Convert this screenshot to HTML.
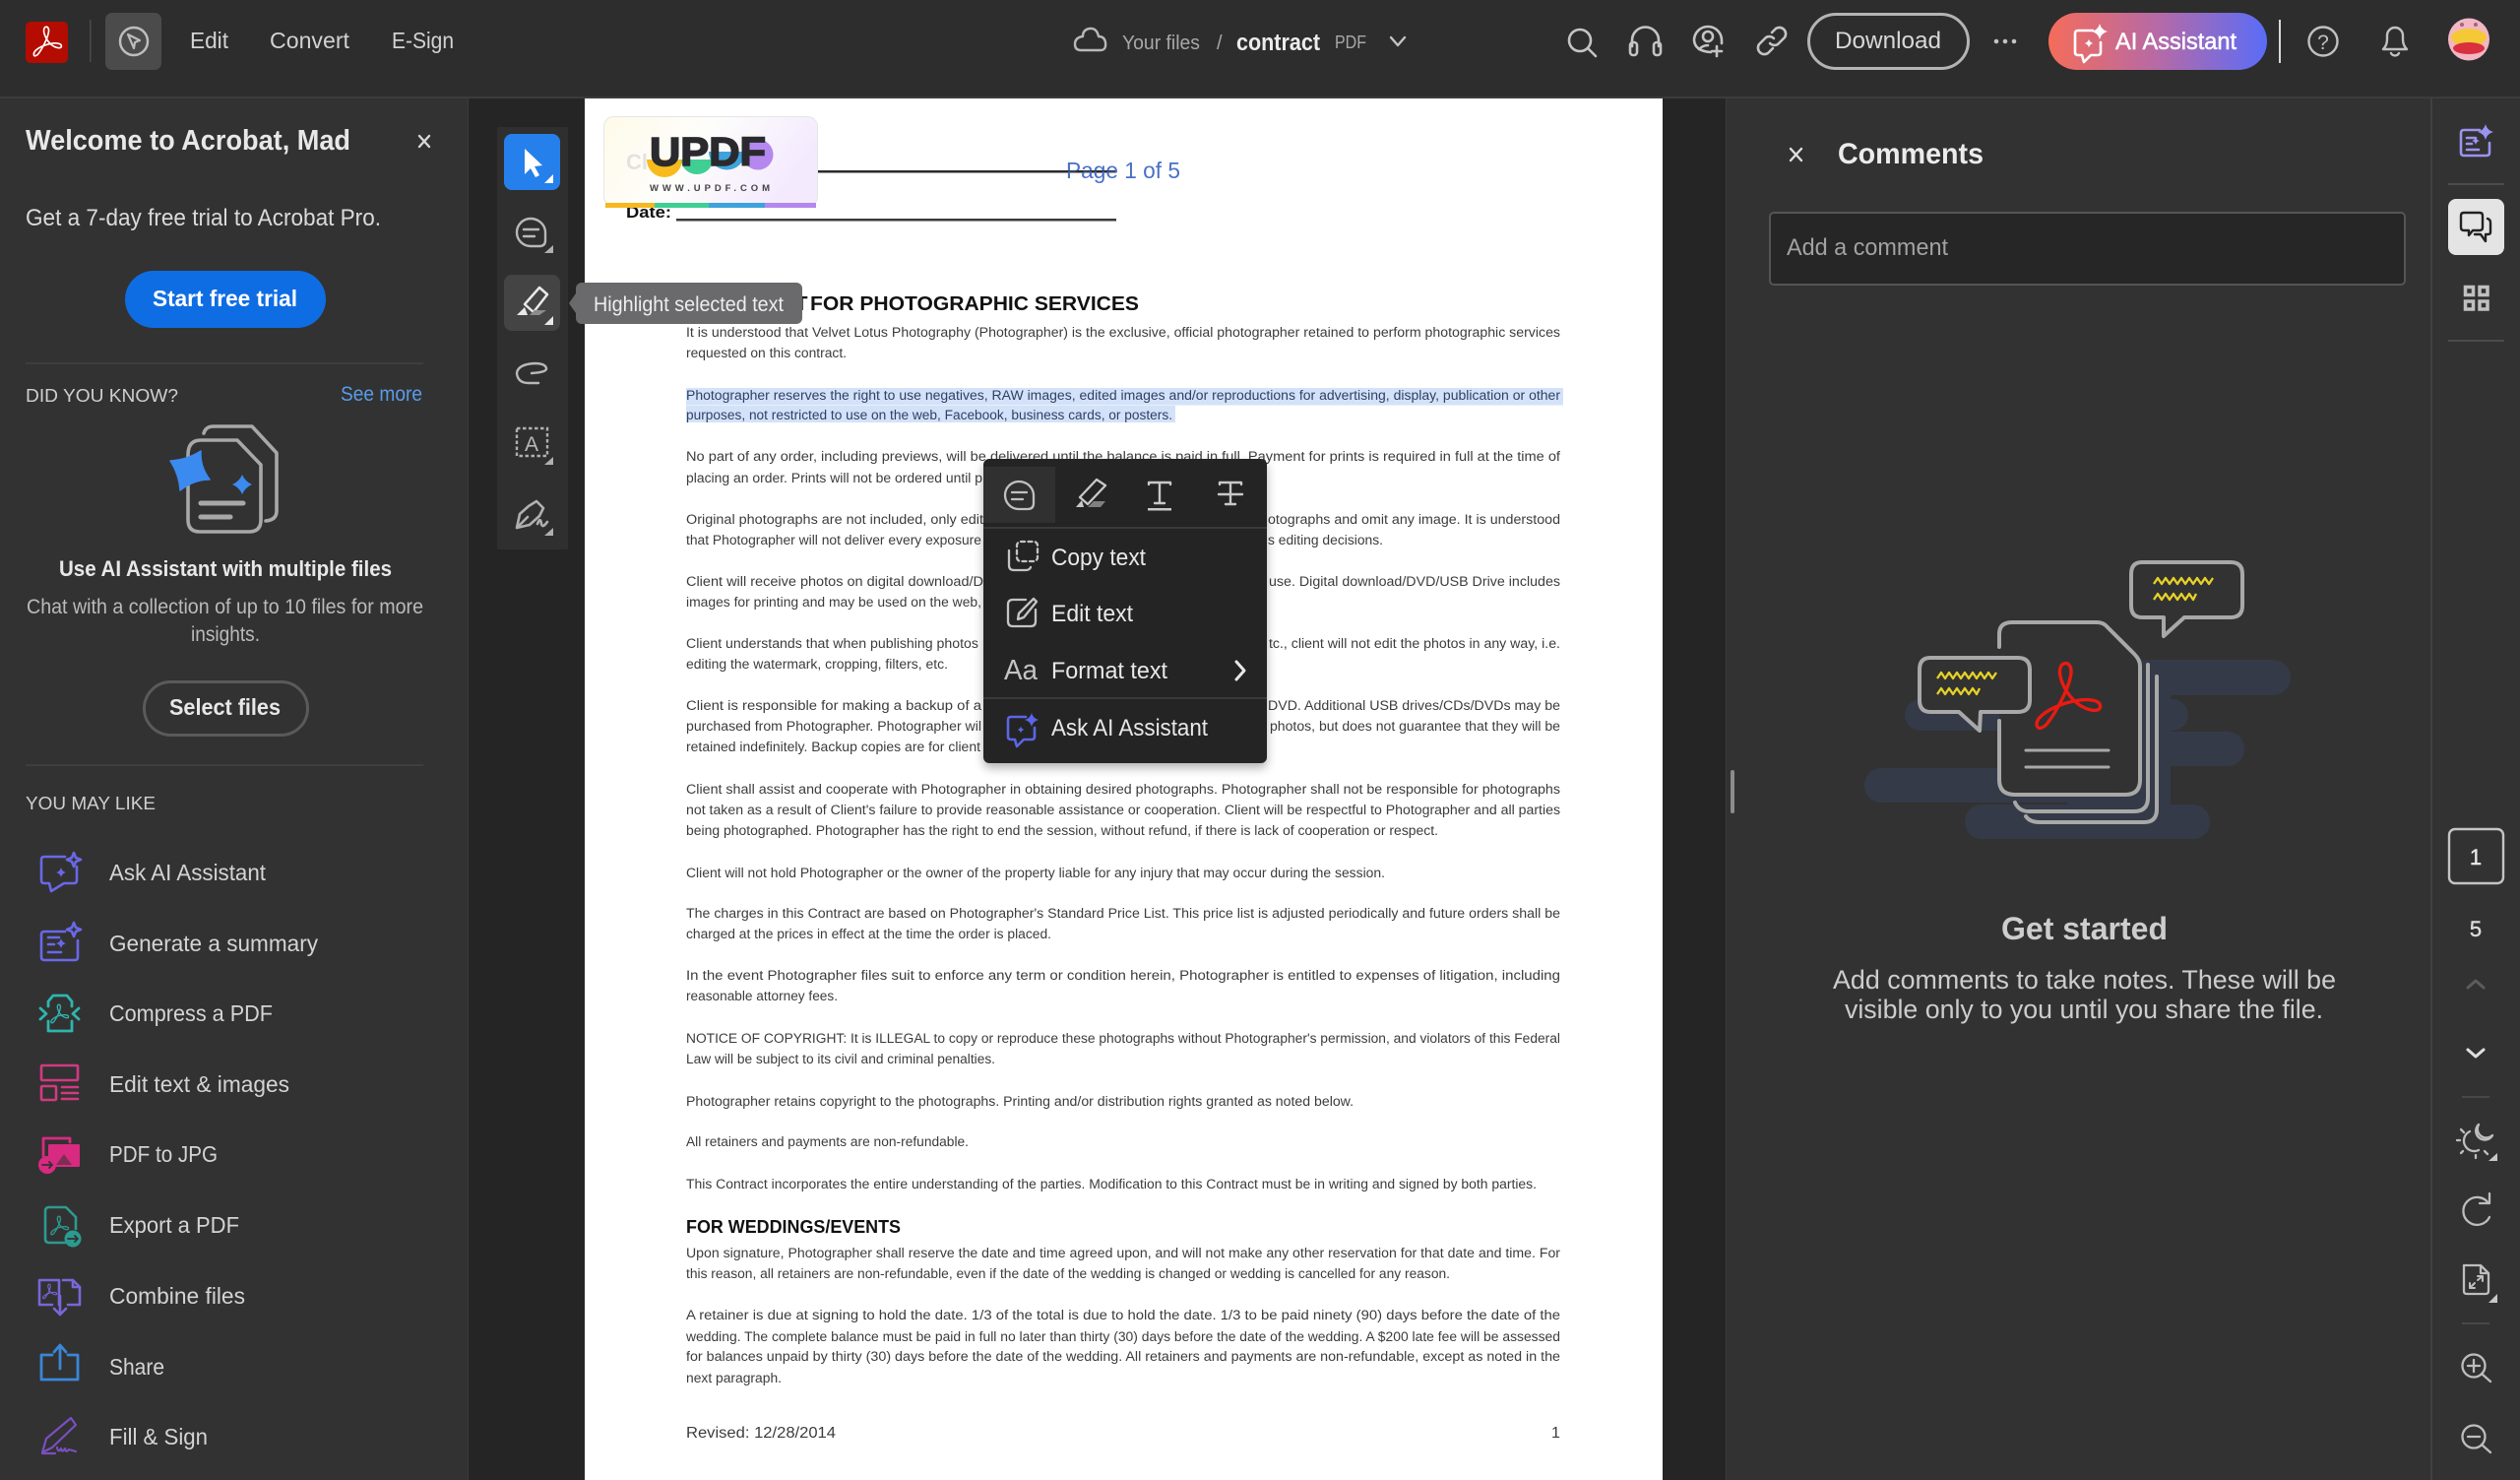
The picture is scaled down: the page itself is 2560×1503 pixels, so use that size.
<!DOCTYPE html>
<html lang="en">
<head>
<meta charset="utf-8">
<title>Adobe Acrobat - contract</title>
<style>
html,body{margin:0;padding:0;width:2560px;height:1503px;overflow:hidden;background:#2d2d2d}
svg{display:block;font-family:"Liberation Sans",Arial,sans-serif}
.d text{font-size:13.5px;fill:#3c3c3c}
.h text{font-size:13.5px;fill:#2f3f66}
.m text{font-size:24px;fill:#e8e8e8}
.l text{font-size:23px;fill:#d4d4d4}
.ic{fill:none;stroke-linecap:round;stroke-linejoin:round}
</style>
</head>
<body>
<svg width="2560" height="1503" viewBox="0 0 2560 1503" xmlns="http://www.w3.org/2000/svg">
<defs>
<path id="acro" d="M20 92C32 76 52 40 55 16C56 4 50 0 46 1C38 2 37 14 40 24C45 42 58 60 74 68C86 74 98 74 98 66C98 56 78 54 60 58C40 62 18 72 8 84C2 92 4 100 10 99C14 98 17 96 20 92Z"/>
<path id="star" d="M0-10Q2-2 10 0Q2 2 0 10Q-2 2-10 0Q-2-2 0-10Z"/>
<linearGradient id="ai" x1="0" x2="1" y1="0" y2="0"><stop offset="0" stop-color="#f56c5a"/><stop offset=".5" stop-color="#b66aa6"/><stop offset="1" stop-color="#5a6cf8"/></linearGradient>
<linearGradient id="upd" x1="0" x2="1" y1="0" y2=".3"><stop offset="0" stop-color="#fffbe9"/><stop offset=".5" stop-color="#fdfdfb"/><stop offset="1" stop-color="#f4eafe"/></linearGradient>
<clipPath id="av"><ellipse cx="2508" cy="40" rx="21" ry="21.5"/></clipPath>
</defs>

<!-- backgrounds -->
<rect width="2560" height="1503" fill="#323232"/>
<rect width="2560" height="99" fill="#2d2d2d"/>
<rect y="98" width="2560" height="2" fill="#3c3c3c"/>
<rect x="476" y="100" width="118" height="1403" fill="#252525"/>
<rect x="475" y="100" width="1" height="1403" fill="#3a3a3a"/>
<rect x="1689" y="100" width="64" height="1403" fill="#252525"/>
<rect x="1753" y="100" width="1" height="1403" fill="#3d3d3d"/>
<rect x="2469" y="100" width="2" height="1403" fill="#414141"/>
<rect x="594" y="100" width="1095" height="1403" fill="#fff"/>
<rect x="1758" y="782" width="4" height="44" rx="2" fill="#8c8c8c"/>

<!-- top bar left -->
<rect x="26" y="22" width="43" height="42" rx="5" fill="#b40c00"/>
<use href="#acro" transform="translate(33,27) scale(.3)" fill="none" stroke="#fff" stroke-width="5.500"/>
<rect x="91" y="20" width="1.5" height="43" fill="#4a4a4a"/>
<rect x="107" y="13" width="57" height="58" rx="7" fill="#4b4b4b"/>
<circle cx="136" cy="42" r="14" fill="none" stroke="#bdbdbd" stroke-width="2.5"/>
<path d="M130 35L142 41L137 43L136 49Z" fill="none" stroke="#bdbdbd" stroke-width="2.2" stroke-linejoin="round"/>
<g font-size="23" fill="#d2d2d2">
<text x="193" y="49" textLength="39" lengthAdjust="spacingAndGlyphs">Edit</text>
<text x="274" y="49" textLength="81" lengthAdjust="spacingAndGlyphs">Convert</text>
<text x="398" y="49" textLength="63" lengthAdjust="spacingAndGlyphs">E-Sign</text>
</g>
<path class="ic" d="M1098 51H1118Q1124 51 1123 43Q1122 37 1116 37Q1114 28 1107 29Q1100 30 1100 37Q1092 38 1092 45Q1092 51 1098 51Z" stroke="#b8b8b8" stroke-width="2.4"/>
<text x="1140" y="50" font-size="20" fill="#a8a8a8" textLength="79" lengthAdjust="spacingAndGlyphs">Your files</text>
<text x="1236" y="50" font-size="20" fill="#a8a8a8">/</text>
<text x="1256" y="51" font-size="24" font-weight="700" fill="#ececec" textLength="85" lengthAdjust="spacingAndGlyphs">contract</text>
<text x="1356" y="49" font-size="18" fill="#a8a8a8" textLength="32" lengthAdjust="spacingAndGlyphs">PDF</text>
<path class="ic" d="M1413 38L1420 46L1427 38" stroke="#c4c4c4" stroke-width="2.4"/>

<!-- top bar right -->
<g class="ic" stroke="#c4c4c4" stroke-width="2.6">
<circle cx="1605" cy="41" r="11"/><path d="M1613 49L1621 57"/>
<path d="M1658 47V41A13.500 13.500 0 0 1 1685 41V47"/><rect x="1656" y="43" width="7" height="13" rx="3"/><rect x="1680" y="43" width="7" height="13" rx="3"/>
<path d="M1738 53Q1722 52 1721 41A14 14 0 1 1 1749 41V44"/><circle cx="1735" cy="37" r="5"/><path d="M1726 50Q1730 46 1735 46M1744 47V57M1739 52H1749"/>
<path d="M1800 33L1804 29A6.500 6.500 0 0 1 1813 38L1806 45A6.500 6.500 0 0 1 1798 44M1801 49L1796 54A6.500 6.500 0 0 1 1787 45L1794 38A6.500 6.500 0 0 1 1802 39"/>
</g>
<rect x="1837.500" y="14.500" width="162" height="55" rx="27.500" fill="none" stroke="#b4b4b4" stroke-width="3"/>
<text x="1864" y="49" font-size="24" fill="#d8d8d8" textLength="108" lengthAdjust="spacingAndGlyphs">Download</text>
<g fill="#c4c4c4"><circle cx="2028" cy="42" r="2.300"/><circle cx="2037" cy="42" r="2.300"/><circle cx="2046" cy="42" r="2.300"/></g>
<rect x="2081" y="13" width="222" height="58" rx="29" fill="url(#ai)"/>
<g transform="translate(2107,26)">
<path class="ic" d="M19 5H4Q1 5 1 8V27Q1 30 4 30H8L10 37L17 30H24Q27 30 27 27V17" stroke="#fff" stroke-width="2.6"/>
<use href="#star" transform="translate(26,6) scale(.8)" fill="#fff"/>
<use href="#star" transform="translate(15,18) scale(.42)" fill="#fff"/>
</g>
<text x="2149" y="50" font-size="24" fill="#fff" stroke="#fff" stroke-width=".5" textLength="123" lengthAdjust="spacingAndGlyphs">AI Assistant</text>
<rect x="2315" y="20" width="2" height="44" fill="#d8d8d8"/>
<circle cx="2360" cy="42" r="14.500" fill="none" stroke="#c0c0c0" stroke-width="2.400"/>
<text x="2360" y="50" font-size="21" fill="#c0c0c0" text-anchor="middle">?</text>
<path class="ic" d="M2421 50H2445Q2441 46 2441 40V36A8 8 0 0 0 2425 36V40Q2425 46 2421 50ZM2429 54A4.500 4.500 0 0 0 2437 54" stroke="#c0c0c0" stroke-width="2.400"/>
<g clip-path="url(#av)">
<rect x="2486" y="18" width="44" height="44" fill="#f2b6c4"/>
<ellipse cx="2508" cy="38" rx="18" ry="9" fill="#f5c936"/>
<ellipse cx="2508" cy="49" rx="16" ry="6" fill="#d92f3e"/>
<circle cx="2501" cy="25" r="2" fill="#9a6a76"/><circle cx="2515" cy="25" r="2" fill="#9a6a76"/>
</g>

<!-- left panel -->
<text x="26" y="152" font-size="29" font-weight="700" fill="#e8e8e8" textLength="330" lengthAdjust="spacingAndGlyphs">Welcome to Acrobat, Mad</text>
<path class="ic" d="M426 138L436 149M436 138L426 149" stroke="#d8d8d8" stroke-width="2.400"/>
<text x="26" y="229" font-size="24" fill="#dadada" textLength="361" lengthAdjust="spacingAndGlyphs">Get a 7-day free trial to Acrobat Pro.</text>
<rect x="127" y="275" width="204" height="58" rx="29" fill="#0f6de3"/>
<text x="155" y="311" font-size="23" font-weight="700" fill="#fff" textLength="147" lengthAdjust="spacingAndGlyphs">Start free trial</text>
<rect x="26" y="368" width="404" height="2" fill="#3e3e3e"/>
<text x="26" y="408" font-size="18" fill="#cfcfcf" textLength="155" lengthAdjust="spacingAndGlyphs">DID YOU KNOW?</text>
<text x="346" y="407" font-size="21" fill="#5a9be8" textLength="83" lengthAdjust="spacingAndGlyphs">See more</text>

<g class="ic" stroke="#a8a8a8" stroke-width="3.600">
<path d="M207 440Q209 433 217 433H256L281 460V519Q281 528 270 529"/>
<path d="M191 462Q191 447 204 447H241L265 472V528Q265 540 253 540H203Q191 540 191 528Z" fill="#323232"/>
<path d="M204 511H247M204 525H234" stroke-width="5"/>
</g>
<path d="M173 468Q190 467 204 458Q203 474 213 487Q197 487 183 498Q182 482 173 468Z" fill="#3b8aef" stroke="#3b8aef" stroke-width="1.500" stroke-linejoin="round"/>
<path d="M246 482Q249 489 256 492Q249 495 246 502Q243 495 236 492Q243 489 246 482Z" fill="#3b8aef"/>
<text x="60" y="585" font-size="22" font-weight="700" fill="#e8e8e8" textLength="338" lengthAdjust="spacingAndGlyphs">Use AI Assistant with multiple files</text>
<text x="27" y="623" font-size="21" fill="#bababa" textLength="403" lengthAdjust="spacingAndGlyphs">Chat with a collection of up to 10 files for more</text>
<text x="194" y="651" font-size="21" fill="#bababa" textLength="70" lengthAdjust="spacingAndGlyphs">insights.</text>
<rect x="146.500" y="692.500" width="166" height="54" rx="27" fill="none" stroke="#5a5a5a" stroke-width="3"/>
<text x="172" y="726" font-size="23" font-weight="700" fill="#e8e8e8" textLength="113" lengthAdjust="spacingAndGlyphs">Select files</text>
<rect x="26" y="776" width="404" height="2" fill="#3e3e3e"/>
<text x="26" y="822" font-size="18" fill="#cfcfcf" textLength="132" lengthAdjust="spacingAndGlyphs">YOU MAY LIKE</text>

<g class="l">
<text x="111" y="894" textLength="159" lengthAdjust="spacingAndGlyphs">Ask AI Assistant</text>
<text x="111" y="966" textLength="212" lengthAdjust="spacingAndGlyphs">Generate a summary</text>
<text x="111" y="1037" textLength="166" lengthAdjust="spacingAndGlyphs">Compress a PDF</text>
<text x="111" y="1109" textLength="183" lengthAdjust="spacingAndGlyphs">Edit text &amp; images</text>
<text x="111" y="1180" textLength="110" lengthAdjust="spacingAndGlyphs">PDF to JPG</text>
<text x="111" y="1252" textLength="132" lengthAdjust="spacingAndGlyphs">Export a PDF</text>
<text x="111" y="1324" textLength="138" lengthAdjust="spacingAndGlyphs">Combine files</text>
<text x="111" y="1396" textLength="56" lengthAdjust="spacingAndGlyphs">Share</text>
<text x="111" y="1467" textLength="100" lengthAdjust="spacingAndGlyphs">Fill &amp; Sign</text>
</g>

<!-- left list icons -->
<g class="ic" stroke="#6a68e8" stroke-width="2.600">
<path d="M66 870H45Q42 870 42 873V894Q42 897 45 897H50L52 905L65 897H75Q78 897 78 894V880"/>
<path d="M75 866L77 871L82 873L77 875L75 880L73 875L68 873L73 871Z" fill="#323232"/>
<path d="M66 946H45Q42 946 42 949V972Q42 975 45 975H76Q79 975 79 972V955"/>
<path d="M75 937L77 942L82 944L77 946L75 951L73 946L68 944L73 942Z" fill="#323232"/>
<path d="M49 952H60M49 959H55M49 967H62"/>
</g>
<use href="#star" transform="translate(62,886) scale(.5)" fill="#6a68e8"/>
<use href="#star" transform="translate(62,958) scale(.5)" fill="#6a68e8"/>
<g class="ic" stroke="#2fb5ad" stroke-width="2.800">
<path d="M49 1022V1017L54 1011H68L73 1017V1022M49 1037V1047H73V1037"/>
<path d="M41 1024L47 1029.500L41 1035M80 1024L74 1029.500L80 1035"/>
</g>
<use href="#acro" transform="translate(51,1020) scale(.19)" fill="none" stroke="#2fb5ad" stroke-width="7"/>
<g class="ic" stroke="#d03a80" stroke-width="2.600">
<rect x="42" y="1082" width="37" height="15" rx="1"/><rect x="42" y="1103" width="15" height="14" rx="1"/>
<path d="M63 1104H79M63 1110H79M63 1116H79"/>
</g>
<path class="ic" d="M44 1174V1156H71V1160" stroke="#d82a80" stroke-width="2.800"/>
<rect x="49" y="1162" width="32" height="23" rx="1" fill="#d82a80"/>
<circle cx="48" cy="1183" r="9" fill="#d82a80"/>
<path class="ic" d="M43 1183H53M50 1180L53 1183L50 1186" stroke="#323232" stroke-width="1.800"/>
<path d="M57 1183L65 1172L73 1183Z" fill="#323232" opacity=".55"/>
<g class="ic" stroke="#2c9a90" stroke-width="2.600">
<path d="M66 1262H50Q46 1262 46 1258V1230Q46 1226 50 1226H67L77 1236V1248"/>
</g>
<use href="#acro" transform="translate(51,1235) scale(.19)" fill="none" stroke="#2c9a90" stroke-width="7"/>
<circle cx="74" cy="1258" r="8.500" fill="#2c9a90"/><path class="ic" d="M69 1258H79M76 1255L79 1258L76 1261" stroke="#323232" stroke-width="1.800"/>
<g class="ic" stroke="#7a66d8" stroke-width="2.600">
<path d="M53 1325H40V1300H60V1325"/><path d="M64 1300H74L81 1307V1325H69"/><path d="M74 1300V1307H81"/>
<path d="M61 1316V1335M55 1329L61 1335L67 1329"/>
</g>
<use href="#acro" transform="translate(43,1304) scale(.15)" fill="none" stroke="#7a66d8" stroke-width="7"/>
<g class="ic" stroke="#3a86d8" stroke-width="2.800">
<path d="M53 1376H42V1401H79V1376H69"/><path d="M61 1390V1367M55 1373L61 1366L67 1373"/>
</g>
<g class="ic" stroke="#7a4fc0" stroke-width="2.200">
<path d="M72 1440L77 1447L53 1470L43 1475L47 1461Z"/><path d="M43 1476H56M58 1470Q59 1476 62 1471Q63 1476 66 1471Q67 1476 70 1472L77 1474"/>
</g>

<!-- tools column -->
<rect x="505" y="129" width="72" height="429" rx="2" fill="#2f2f2f"/>
<rect x="512" y="136" width="57" height="57" rx="8" fill="#2680eb"/>
<path d="M533 151V177L539 171L544 180L548 178L543 169L551 168Z" fill="#fff"/>
<polygon points="562,177 562,186 553,186" fill="#fff"/>
<path class="ic" d="M539 222A14 14 0 0 0 525 236A14 14 0 0 0 539 250H548Q554 250 554 244V236A15 14 0 0 0 539 222ZM532 233H547M532 240H543" stroke="#b8b8b8" stroke-width="2.400"/>
<polygon points="562,249 562,257 553,257" fill="#b0b0b0"/>
<rect x="512" y="279" width="57" height="57" rx="8" fill="#444"/>
<path class="ic" d="M548 292L556 299L542 317L533 309Z" stroke="#e8e8e8" stroke-width="2.500"/>
<path d="M525 320L533 312L536 320Z" fill="#e8e8e8"/>
<path d="M538 320L543 315H555L548 320Z" fill="#8c8c8c"/>
<polygon points="562,321 562,330 553,330" fill="#e8e8e8"/>
<path class="ic" d="M540 379Q556 378 555 374Q554 369 543 369Q526 370 525 379Q526 389 537 389H547" stroke="#b8b8b8" stroke-width="2.400"/>
<rect x="525" y="435" width="31" height="28" fill="none" stroke="#b0b0b0" stroke-width="2.400" stroke-dasharray="3.500 2.500"/>
<text x="540" y="458" text-anchor="middle" font-size="21" fill="#b8b8b8">A</text>
<polygon points="562,464 562,472 553,472" fill="#b0b0b0"/>
<path class="ic" d="M545 509L552 516L548 524L538 533L525 536L528 522L537 514ZM525 536L536 525M546 532Q549 524 550 532Q551 537 556 530" stroke="#b0b0b0" stroke-width="2.600"/>
<polygon points="562,536 562,544 553,544" fill="#b0b0b0"/>

<!-- document header -->
<rect x="831" y="173" width="303" height="2.500" fill="#2a2a2a"/>
<text x="636" y="221" font-size="17" font-weight="700" fill="#111" textLength="46" lengthAdjust="spacingAndGlyphs">Date:</text>
<rect x="687" y="222" width="447" height="2.500" fill="#3a3a3a"/>
<text x="1083" y="181" font-size="23" fill="#4a70c8" textLength="116" lengthAdjust="spacingAndGlyphs">Page 1 of 5</text>
<rect x="1083" y="173" width="50" height="1.500" fill="#2a2a2a" opacity=".7"/>

<!-- UPDF watermark -->
<rect x="613.500" y="118.500" width="217" height="91" rx="10" fill="url(#upd)" stroke="#e6e6e6"/>
<text x="636" y="172" font-size="22" font-weight="700" fill="#e2e2e2">Cl</text>
<rect x="615" y="206" width="50" height="5" fill="#f5b81e"/><rect x="665" y="206" width="55" height="5" fill="#3fcf94"/><rect x="720" y="206" width="57" height="5" fill="#3ea2dc"/><rect x="777" y="206" width="52" height="5" fill="#b488ee"/>
<path d="M657 162A18 18 0 0 0 693 162Z" fill="#f7bb1e"/>
<path d="M692 162A16 15 0 0 0 724 162Z" fill="#3fcf94"/>
<path d="M720 154A18 18 0 0 0 757 154Z" fill="#3ea2dc"/>
<circle cx="770" cy="157" r="15.500" fill="#b488ee"/>
<text x="660" y="168" font-size="41" font-weight="700" fill="#2a2a2e" stroke="#2a2a2e" stroke-width="1.600" textLength="118" lengthAdjust="spacingAndGlyphs">UPDF</text>
<text x="660" y="194" font-size="9.500" font-weight="700" fill="#444" textLength="122" lengthAdjust="spacing">WWW.UPDF.COM</text>

<!-- document body -->
<text x="823" y="315" font-size="20.500" font-weight="700" fill="#111" textLength="334" lengthAdjust="spacingAndGlyphs">FOR PHOTOGRAPHIC SERVICES</text>
<text x="808" y="315" font-size="20.500" font-weight="700" fill="#111" text-anchor="start">T</text>
<rect x="697" y="394" width="891" height="17.500" fill="#d3e2f8"/>
<rect x="697" y="412" width="497" height="17" fill="#d3e2f8"/>
<g class="h">
<text x="697" y="406" textLength="888" lengthAdjust="spacingAndGlyphs">Photographer reserves the right to use negatives, RAW images, edited images and/or reproductions for advertising, display, publication or other</text>
<text x="697" y="426" textLength="494" lengthAdjust="spacingAndGlyphs">purposes, not restricted to use on the web, Facebook, business cards, or posters.</text>
</g>
<g class="d">
<text x="697" y="342" textLength="888" lengthAdjust="spacingAndGlyphs">It is understood that Velvet Lotus Photography (Photographer) is the exclusive, official photographer retained to perform photographic services</text>
<text x="697" y="363" textLength="163" lengthAdjust="spacingAndGlyphs">requested on this contract.</text>
<text x="697" y="468" textLength="888" lengthAdjust="spacingAndGlyphs">No part of any order, including previews, will be delivered until the balance is paid in full. Payment for prints is required in full at the time of</text>
<text x="697" y="490" textLength="301" lengthAdjust="spacingAndGlyphs">placing an order. Prints will not be ordered until p</text>
<text x="697" y="532" textLength="302" lengthAdjust="spacingAndGlyphs">Original photographs are not included, only edit</text>
<text x="1288" y="532" textLength="297" lengthAdjust="spacingAndGlyphs">otographs and omit any image. It is understood</text>
<text x="697" y="553" textLength="300" lengthAdjust="spacingAndGlyphs">that Photographer will not deliver every exposure</text>
<text x="1288" y="553" textLength="117" lengthAdjust="spacingAndGlyphs">s editing decisions.</text>
<text x="697" y="595" textLength="302" lengthAdjust="spacingAndGlyphs">Client will receive photos on digital download/D</text>
<text x="1289" y="595" textLength="296" lengthAdjust="spacingAndGlyphs">use. Digital download/DVD/USB Drive includes</text>
<text x="697" y="616" textLength="300" lengthAdjust="spacingAndGlyphs">images for printing and may be used on the web,</text>
<text x="697" y="658" textLength="297" lengthAdjust="spacingAndGlyphs">Client understands that when publishing photos</text>
<text x="1289" y="658" textLength="296" lengthAdjust="spacingAndGlyphs">tc., client will not edit the photos in any way, i.e.</text>
<text x="697" y="679" textLength="266" lengthAdjust="spacingAndGlyphs">editing the watermark, cropping, filters, etc.</text>
<text x="697" y="721" textLength="300" lengthAdjust="spacingAndGlyphs">Client is responsible for making a backup of a</text>
<text x="1288" y="721" textLength="297" lengthAdjust="spacingAndGlyphs">DVD. Additional USB drives/CDs/DVDs may be</text>
<text x="697" y="742" textLength="300" lengthAdjust="spacingAndGlyphs">purchased from Photographer. Photographer wil</text>
<text x="1290" y="742" textLength="295" lengthAdjust="spacingAndGlyphs">photos, but does not guarantee that they will be</text>
<text x="697" y="763" textLength="299" lengthAdjust="spacingAndGlyphs">retained indefinitely. Backup copies are for client</text>
<text x="697" y="806" textLength="888" lengthAdjust="spacingAndGlyphs">Client shall assist and cooperate with Photographer in obtaining desired photographs. Photographer shall not be responsible for photographs</text>
<text x="697" y="827" textLength="888" lengthAdjust="spacingAndGlyphs">not taken as a result of Client's failure to provide reasonable assistance or cooperation. Client will be respectful to Photographer and all parties</text>
<text x="697" y="848" textLength="764" lengthAdjust="spacingAndGlyphs">being photographed. Photographer has the right to end the session, without refund, if there is lack of cooperation or respect.</text>
<text x="697" y="891" textLength="710" lengthAdjust="spacingAndGlyphs">Client will not hold Photographer or the owner of the property liable for any injury that may occur during the session.</text>
<text x="697" y="932" textLength="888" lengthAdjust="spacingAndGlyphs">The charges in this Contract are based on Photographer's Standard Price List. This price list is adjusted periodically and future orders shall be</text>
<text x="697" y="953" textLength="371" lengthAdjust="spacingAndGlyphs">charged at the prices in effect at the time the order is placed.</text>
<text x="697" y="995" textLength="888" lengthAdjust="spacingAndGlyphs">In the event Photographer files suit to enforce any term or condition herein, Photographer is entitled to expenses of litigation, including</text>
<text x="697" y="1016" textLength="154" lengthAdjust="spacingAndGlyphs">reasonable attorney fees.</text>
<text x="697" y="1059" textLength="888" lengthAdjust="spacingAndGlyphs">NOTICE OF COPYRIGHT: It is ILLEGAL to copy or reproduce these photographs without Photographer's permission, and violators of this Federal</text>
<text x="697" y="1080" textLength="314" lengthAdjust="spacingAndGlyphs">Law will be subject to its civil and criminal penalties.</text>
<text x="697" y="1123" textLength="678" lengthAdjust="spacingAndGlyphs">Photographer retains copyright to the photographs. Printing and/or distribution rights granted as noted below.</text>
<text x="697" y="1164" textLength="287" lengthAdjust="spacingAndGlyphs">All retainers and payments are non-refundable.</text>
<text x="697" y="1207" textLength="864" lengthAdjust="spacingAndGlyphs">This Contract incorporates the entire understanding of the parties. Modification to this Contract must be in writing and signed by both parties.</text>
<text x="697" y="1277" textLength="888" lengthAdjust="spacingAndGlyphs">Upon signature, Photographer shall reserve the date and time agreed upon, and will not make any other reservation for that date and time. For</text>
<text x="697" y="1298" textLength="776" lengthAdjust="spacingAndGlyphs">this reason, all retainers are non-refundable, even if the date of the wedding is changed or wedding is cancelled for any reason.</text>
<text x="697" y="1340" textLength="888" lengthAdjust="spacingAndGlyphs">A retainer is due at signing to hold the date. 1/3 of the total is due to hold the date. 1/3 to be paid ninety (90) days before the date of the</text>
<text x="697" y="1362" textLength="888" lengthAdjust="spacingAndGlyphs">wedding. The complete balance must be paid in full no later than thirty (30) days before the date of the wedding. A $200 late fee will be assessed</text>
<text x="697" y="1382" textLength="888" lengthAdjust="spacingAndGlyphs">for balances unpaid by thirty (30) days before the date of the wedding. All retainers and payments are non-refundable, except as noted in the</text>
<text x="697" y="1404" textLength="97" lengthAdjust="spacingAndGlyphs">next paragraph.</text>
</g>
<text x="697" y="1252" font-size="18" font-weight="700" fill="#111" textLength="218" lengthAdjust="spacingAndGlyphs">FOR WEDDINGS/EVENTS</text>
<text x="697" y="1460" font-size="16" fill="#3c3c3c" textLength="152" lengthAdjust="spacingAndGlyphs">Revised: 12/28/2014</text>
<text x="1576" y="1460" font-size="16" fill="#3c3c3c">1</text>

<!-- tooltip -->
<path d="M585 298L578 308L585 318Z" fill="#6a6a6c"/>
<rect x="585" y="287" width="230" height="42" rx="6" fill="#6a6a6c"/>
<text x="603" y="316" font-size="21" fill="#eee" textLength="193" lengthAdjust="spacingAndGlyphs">Highlight selected text</text>

<!-- context menu -->
<rect x="999" y="466" width="288" height="309" rx="6" fill="#000" opacity=".3" transform="translate(0,5)" style="filter:blur(5px)"/>
<rect x="999" y="466" width="288" height="309" rx="6" fill="#242424"/>
<rect x="999" y="474" width="73" height="57" fill="#303030"/>
<rect x="999" y="535" width="288" height="2" fill="#3a3a3a"/>
<rect x="999" y="708" width="288" height="2" fill="#3a3a3a"/>
<path class="ic" d="M1035 489A14 14 0 0 0 1021 503A14 14 0 0 0 1035 517H1044Q1050 517 1050 511V503A15 14 0 0 0 1035 489ZM1028 500H1043M1028 507H1039" stroke="#c0c0c0" stroke-width="2.300"/>
<path class="ic" d="M1114 487L1123 493L1105 512L1097 505Z" stroke="#c8c8c8" stroke-width="2.300"/>
<path d="M1093 515L1099 508L1101 515Z" fill="#c8c8c8"/><path d="M1105 515L1111 509H1123L1118 515Z" fill="#808080"/>
<path class="ic" d="M1167 492V490H1189V492M1178 490V511M1173 511H1183" stroke="#c8c8c8" stroke-width="2.400"/><rect x="1166" y="516" width="24" height="2.500" fill="#c8c8c8"/>
<path class="ic" d="M1239 492V490H1261V492M1250 490V512M1245 512H1255M1238 502H1262" stroke="#c8c8c8" stroke-width="2.400"/>
<g class="ic" stroke="#c4c4c4" stroke-width="2.300">
<rect x="1033" y="550" width="21" height="20" rx="4" stroke-dasharray="4 3.500"/>
<path d="M1025 559V574Q1025 579 1030 579H1042Q1046 579 1047 576"/>
<path d="M1042 609H1029Q1024 609 1024 614V631Q1024 636 1029 636H1047Q1052 636 1052 631V619"/>
<path d="M1050 608L1053 611L1040 627L1034 629L1035 623Z"/>
<path d="M1256 672L1264 681L1256 690" stroke="#e8e8e8" stroke-width="3"/>
</g>
<text x="1020" y="690" font-size="29" fill="#c4c4c4" textLength="34" lengthAdjust="spacingAndGlyphs">Aa</text>
<g transform="translate(1022,724)">
<path class="ic" d="M20 4H5Q2 4 2 7V24Q2 27 5 27H9L11 34L18 27H26Q29 27 29 24V15" stroke="#5a66e8" stroke-width="2.600"/>
<use href="#star" transform="translate(26,7) scale(.7)" fill="#5a66e8"/>
<use href="#star" transform="translate(15,17) scale(.35)" fill="#5a66e8"/>
</g>
<g class="m">
<text x="1068" y="574" textLength="96" lengthAdjust="spacingAndGlyphs">Copy text</text>
<text x="1068" y="631" textLength="83" lengthAdjust="spacingAndGlyphs">Edit text</text>
<text x="1068" y="689" textLength="118" lengthAdjust="spacingAndGlyphs">Format text</text>
<text x="1068" y="747" textLength="159" lengthAdjust="spacingAndGlyphs">Ask AI Assistant</text>
</g>

<!-- comments panel -->
<path class="ic" d="M1819 151L1830 163M1830 151L1819 163" stroke="#e0e0e0" stroke-width="2.400"/>
<text x="1867" y="166" font-size="30" font-weight="700" fill="#ececec" textLength="148" lengthAdjust="spacingAndGlyphs">Comments</text>
<rect x="1798" y="216" width="645" height="73" rx="4" fill="#262626" stroke="#555" stroke-width="2"/>
<text x="1815" y="259" font-size="24" fill="#a2a2a2" textLength="164" lengthAdjust="spacingAndGlyphs">Add a comment</text>

<!-- illustration -->
<g fill="#343a47">
<rect x="2150" y="670" width="177" height="36" rx="18"/>
<rect x="1935" y="710" width="288" height="32" rx="16"/>
<rect x="2100" y="700" width="105" height="120"/>
<rect x="2100" y="743" width="180" height="35" rx="17"/>
<rect x="1894" y="780" width="270" height="35" rx="17"/>
<rect x="1996" y="817" width="249" height="35" rx="17"/>
</g>
<g class="ic" stroke="#a8a8a8" stroke-width="4">
<path d="M2058 829Q2062 835 2072 835H2178Q2191 835 2191 822V687"/>
<path d="M2047 815Q2051 824 2061 824H2168Q2182 824 2182 810V675"/>
<path d="M2031 657V644Q2031 632 2044 632H2130Q2137 632 2141 637L2168 664Q2174 670 2174 676V792Q2174 807 2159 807H2047Q2031 807 2031 792V644" fill="#323232" stroke="none"/>
<path d="M2031 657V644Q2031 632 2044 632H2130Q2137 632 2141 637L2168 664Q2174 670 2174 676V792Q2174 807 2159 807H2047Q2031 807 2031 792V732"/>
<path d="M2058 762H2142M2058 779H2142" stroke-width="3"/>
<path d="M1961 668H2050Q2062 668 2062 680V711Q2062 723 2050 723H2012L2011 742L1990 723H1961Q1950 723 1950 711V680Q1950 668 1961 668Z" fill="#323232"/>
<path d="M2176 571H2266Q2278 571 2278 583V615Q2278 627 2266 627H2219L2198 646V627H2176Q2165 627 2165 615V583Q2165 571 2176 571Z" fill="#323232"/>
</g>
<use href="#acro" transform="translate(2066,673) scale(.69,.67)" fill="none" stroke="#e81b12" stroke-width="5"/>
<g fill="none" stroke="#e6d227" stroke-width="2.300" stroke-linejoin="round">
<path d="M1968 689l4-6 4 6 4-6 4 6 4-6 4 6 4-6 4 6 4-6 4 6 4-6 4 6 4-6 4 6 4-6"/>
<path d="M1968 705l4-6 4 6 4-6 4 6 4-6 4 6 4-6 4 6 4-6 4 6 3-6"/>
<path d="M2188 593l4-6 4 6 4-6 4 6 4-6 4 6 4-6 4 6 4-6 4 6 4-6 4 6 4-6 4 6 4-6"/>
<path d="M2188 609l4-6 4 6 4-6 4 6 4-6 4 6 4-6 4 6 4-6 4 6 3-6"/>
</g>
<text x="2033" y="954" font-size="32" font-weight="700" fill="#cdcdcd" textLength="169" lengthAdjust="spacingAndGlyphs">Get started</text>
<text x="1862" y="1004" font-size="27" fill="#cdcdcd" textLength="511" lengthAdjust="spacingAndGlyphs">Add comments to take notes. These will be</text>
<text x="1874" y="1034" font-size="27" fill="#cdcdcd" textLength="486" lengthAdjust="spacingAndGlyphs">visible only to you until you share the file.</text>

<!-- right rail -->
<g class="ic" stroke="#9a94f0" stroke-width="2.600">
<path d="M2519 132H2503Q2500 132 2500 135V155Q2500 158 2503 158H2526Q2529 158 2529 155V145"/>
<path d="M2506 140H2515M2506 146H2511M2506 152H2518"/>
</g>
<use href="#star" transform="translate(2525,134) scale(.8)" fill="#9a94f0"/>
<use href="#star" transform="translate(2515,143) scale(.4)" fill="#9a94f0"/>
<rect x="2487" y="186" width="57" height="2" fill="#4c4c4c"/>
<rect x="2487" y="202" width="57" height="57" rx="8" fill="#e4e4e4"/>
<g class="ic" stroke="#222" stroke-width="2.400">
<path d="M2503 216H2519Q2522 216 2522 219V231Q2522 234 2519 234H2512L2508 239V234H2503Q2500 234 2500 231V219Q2500 216 2503 216Z"/>
<path d="M2527 222Q2530 223 2530 226V236Q2530 238 2527 238H2525V245L2520 238H2514"/>
</g>
<g fill="none" stroke="#c0c0c0" stroke-width="3.500">
<rect x="2504.500" y="291.500" width="8" height="8"/><rect x="2519" y="291.500" width="8" height="8"/>
<rect x="2504.500" y="306" width="8" height="8"/><rect x="2519" y="306" width="8" height="8"/>
</g>
<rect x="2487" y="345" width="57" height="2" fill="#4c4c4c"/>
<rect x="2488" y="842" width="55" height="55" rx="6" fill="none" stroke="#c4c4c4" stroke-width="2.400"/>
<text x="2515" y="878" font-size="22" fill="#e8e8e8" stroke="#e8e8e8" stroke-width=".4" text-anchor="middle">1</text>
<text x="2515" y="951" font-size="22" fill="#dcdcdc" stroke="#dcdcdc" stroke-width=".4" text-anchor="middle">5</text>
<path class="ic" d="M2507 1003L2515 996L2523 1003" stroke="#5c5c5c" stroke-width="3"/>
<path class="ic" d="M2507 1066L2515 1073L2523 1066" stroke="#e0e0e0" stroke-width="3"/>
<rect x="2501" y="1113" width="28" height="2" fill="#484848"/>
<g class="ic" stroke="#bdbdbd" stroke-width="2.300">
<path d="M2518 1168A10 10 0 1 1 2509 1149"/>
<path d="M2518 1142A9 9 0 0 0 2532 1153A9 9 0 1 1 2518 1142Z"/>
<path d="M2500 1147L2503 1150M2499 1158H2496M2502 1169L2500 1171M2515 1173V1176M2524 1169L2527 1172"/>
<path d="M2528 1222A14 14 0 1 0 2529 1236M2519 1222H2529V1212"/>
<path d="M2503 1285H2520L2528 1293V1311Q2528 1314 2525 1314H2506Q2503 1314 2503 1311ZM2520 1285V1293H2528"/>
<path d="M2509 1308L2514 1303M2509 1303V1308H2514M2522 1296L2517 1300M2517 1296H2522V1301" stroke-width="2"/>
<circle cx="2513" cy="1387" r="11.500"/><path d="M2521 1395L2530 1403M2507 1387H2519M2513 1381V1393"/>
<circle cx="2513" cy="1459" r="11.500"/><path d="M2521 1467L2530 1475M2507 1459H2519"/>
</g>
<polygon points="2537,1171 2537,1179 2528,1179" fill="#c8c8c8"/>
<polygon points="2537,1314 2537,1323 2528,1323" fill="#c8c8c8"/>
<rect x="2501" y="1343" width="28" height="2" fill="#484848"/>
</svg>
</body>
</html>
